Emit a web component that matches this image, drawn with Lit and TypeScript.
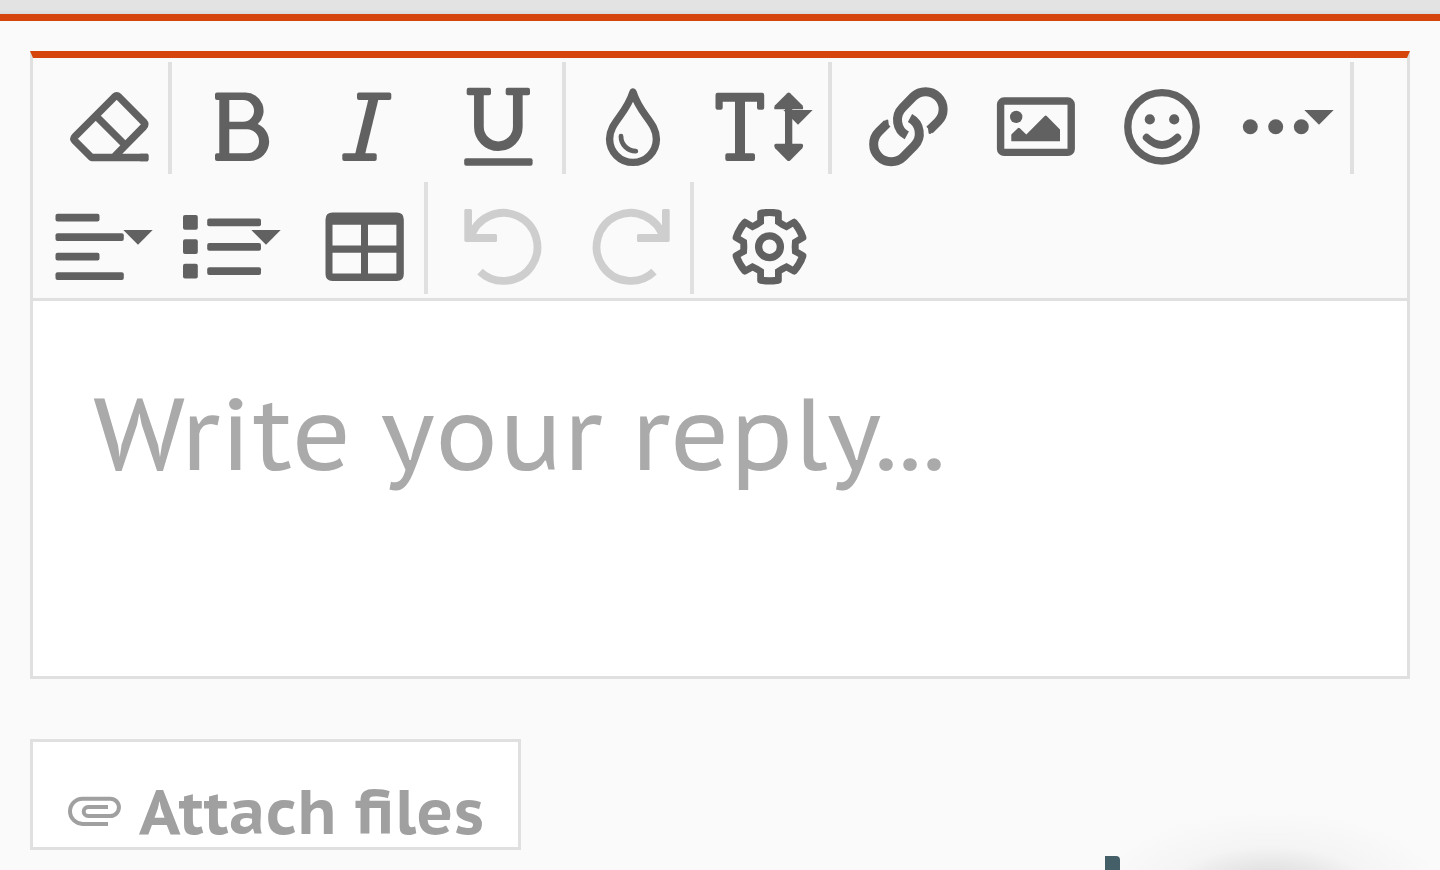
import { LitElement, html, css, svg, nothing } from "lit";
import type { SVGTemplateResult } from "lit";
import { customElement, property, state } from "lit/decorators.js";

interface Tool {
  label: string;
  // left and top corner of the icon's 128 x 112 artboard
  x: number;
  y: number;
  art: SVGTemplateResult;
  menu?: boolean;
  disabled?: boolean;
}

const caret = (x: number, y: number) =>
  svg`<path d="M${x} ${y}h29.4l-14.7 14.7z"/>`;

// One tooth outline of the cog, repeated six times around the centre.
function ring(points: number[][], cx: number, cy: number): string {
  const all: string[] = [];
  for (let k = 0; k < 6; k++) {
    const a = (k * Math.PI) / 3;
    for (const [x, y] of points) {
      const px = cx + x * Math.cos(a) - y * Math.sin(a);
      const py = cy + x * Math.sin(a) + y * Math.cos(a);
      all.push(`${px.toFixed(2)} ${py.toFixed(2)}`);
    }
  }
  return `M${all.join("L")}Z`;
}

const cog =
  ring(
    [[-12.3, -26.6], [-12.3, -34], [-11.8, -35.8], [-9.5, -37], [-4, -37.8], [4, -37.8], [9.5, -37], [11.8, -35.8], [12.3, -34], [12.3, -26.6]],
    769.5,
    246.7,
  ) +
  ring([[-5.5, -22.9], [-5.5, -30.2], [0, -30.6], [5.5, -30.2], [5.5, -22.9], [11.1, -19.2]], 769.5, 246.7);

const linkHalf = "M929.500 130L938 121.600A17.500 17.500 0 0 0 913.200 96.800L902.600 107.600A17.500 17.500 0 0 0 906.800 135.400";
const linkTip = "M927.700 125.500L928.500 132.800Q929.200 134.800 931 133.500L936 129Z";

const undoArt = svg`
  <path d="M480 271.6A34 34 0 1 0 470.6 238" fill="none" stroke="currentColor" stroke-width="7.8"/>
  <path d="M465.5 209H470.5Q472 209 472 210.500V234H495.500Q497 234 497 235.500V240.500Q497 242 495.500 242H466Q464.300 242 464.300 240.300V210.500Q464.300 209 465.500 209Z"/>`;

const groups: Tool[][] = [
  [
    {
      label: "Clear formatting", x: 37, y: 62,
      art: svg`<g fill="none" stroke="currentColor" stroke-width="7.4" stroke-linejoin="round">
        <path d="M148 157.500H91.500L75 141Q72.900 138.700 75 136.500L114.400 97Q116.700 94.800 119 97L143.600 121.800Q145.900 124.300 143.600 126.800L114 157"/>
        <path d="M97 117L123.500 143.500"/></g>
        <path d="M140 153.800H146.800Q148.700 153.800 148.700 155.500V159.500Q148.700 161.200 146.800 161.200H140Z"/>`,
    },
  ],
  [
    {
      label: "Bold", x: 175, y: 62,
      art: svg`<path fill-rule="evenodd" d="M217 92.500H245.500A18.200 18.200 0 0 1 257.800 124A19.400 19.400 0 0 1 248.500 161H217q-2 0-2-2v-3.700q0-2 2-2h2.300V100H217q-2 0-2-2v-3.500q0-2 2-2ZM229.300 100V121.700H243.200a10.850 10.850 0 0 0 0-21.700ZM229.300 129.300V153.300H247a12 12 0 0 0 0-24Z"/>`,
    },
    {
      label: "Italic", x: 303, y: 62,
      art: svg`<rect x="357" y="92.500" width="34.300" height="7.500" rx="2"/>
        <rect x="342.300" y="153.300" width="34.400" height="7.700" rx="2"/>
        <path d="M368.500 99H378.500L365 154.500H355Z"/>`,
    },
    {
      label: "Underline", x: 431, y: 62,
      art: svg`<rect x="466.700" y="87.700" width="24.300" height="7.500" rx="2"/>
        <rect x="505.700" y="87.700" width="24.300" height="7.500" rx="2"/>
        <path d="M478.900 92V126.800a19.450 19.450 0 0 0 38.900 0V92" fill="none" stroke="currentColor" stroke-width="9.700"/>
        <rect x="464.200" y="158.200" width="68.400" height="7.600" rx="2"/>`,
    },
  ],
  [
    {
      label: "Colors", x: 569, y: 62,
      art: svg`<g fill="none" stroke="currentColor" stroke-linejoin="round" stroke-linecap="round">
        <path stroke-width="7.400" d="M633 92C640 115 656.400 122.500 656.400 139A23.400 23.400 0 0 1 609.600 139C609.600 122.500 626 115 633 92Z"/>
        <path stroke-width="4.800" d="M621 136.200C621 144.500 627.500 151 635.800 151.200"/></g>`,
    },
    {
      label: "Font size", x: 697, y: 62, menu: true,
      art: svg`<path d="M717.500 92.800H762Q764.200 92.800 764.200 95V107.700Q764.200 109.700 762.200 109.700H759Q757 109.700 757 107.700V101.700H745V153.300H753Q755 153.300 755 155.300V159Q755 161 753 161H727.300Q725.300 161 725.300 159V155.300Q725.300 153.300 727.300 153.300H735V101.700H722.700V107.700Q722.700 109.700 720.700 109.700H717.500Q715.500 109.700 715.500 107.700V95Q715.500 92.800 717.500 92.800Z"/>
        <path d="M787.200 93.200Q788.700 91.800 790.200 93.200L802.300 105.300Q803.600 107 803 109.200H774.400Q773.800 107 775.100 105.300Z"/>
        <path d="M785 108.500H792.300V145H785Z"/>
        <path d="M787.200 160.400Q788.700 161.800 790.200 160.400L802.300 148.300Q804.400 144.500 801.500 143.800H775.900Q773 144.500 775.100 148.300Z"/>
        ${caret(783.3, 110)}`,
    },
  ],
  [
    {
      label: "Insert link", x: 835, y: 62,
      art: svg`<g stroke-width="9" stroke-linejoin="round">
        <path d=${linkHalf} fill="none" stroke="currentColor"/>
        <path d=${linkTip}/>
        <g transform="rotate(180 908.400 126.700)">
          <path d=${linkHalf} fill="none" stroke="currentColor"/>
          <path d=${linkTip}/>
        </g></g>`,
    },
    {
      label: "Insert image", x: 963, y: 62,
      art: svg`<rect x="1000.600" y="101" width="70.600" height="51.400" rx="3.500" fill="none" stroke="currentColor" stroke-width="7.400"/>
        <circle cx="1016.200" cy="116.900" r="6.200"/>
        <path d="M1011.300 141.300V134.500L1017.800 128.200Q1018.800 127.200 1019.800 128.200L1026.300 134.500L1044.700 116Q1045.700 115 1046.700 116L1060 129.500V141.300Z"/>`,
    },
    {
      label: "Emoticons", x: 1091, y: 62,
      art: svg`<circle cx="1162" cy="126.800" r="34.200" fill="none" stroke="currentColor" stroke-width="7.400"/>
        <circle cx="1149.800" cy="119.400" r="5.100"/><circle cx="1174.200" cy="119.400" r="5.100"/>
        <path d="M1146.500 137.500Q1162 152.500 1177.500 137.500" fill="none" stroke="currentColor" stroke-width="7.400" stroke-linecap="round"/>`,
    },
    {
      label: "More rich", x: 1219, y: 62, menu: true,
      art: svg`<circle cx="1250.300" cy="126.800" r="7.500"/><circle cx="1275.700" cy="126.800" r="7.500"/><circle cx="1301.300" cy="126.800" r="7.500"/>
        ${caret(1304.3, 110)}`,
    },
  ],
  [
    {
      label: "Align", x: 37, y: 182, menu: true,
      art: svg`<rect x="55.500" y="213.700" width="44" height="7.700" rx="2"/><rect x="55.500" y="233.200" width="68.300" height="7.700" rx="2"/>
        <rect x="55.500" y="252.700" width="44" height="7.700" rx="2"/><rect x="55.500" y="272.200" width="68.300" height="7.700" rx="2"/>
        ${caret(123.3, 230)}`,
    },
    {
      label: "Lists", x: 165, y: 182, menu: true,
      art: svg`<rect x="183" y="215" width="14.800" height="14.800" rx="2"/><rect x="183" y="239.300" width="14.800" height="14.800" rx="2"/>
        <rect x="183" y="263.700" width="14.800" height="14.800" rx="2"/>
        <rect x="207.200" y="218.600" width="53.800" height="7.700" rx="2"/><rect x="207.200" y="243" width="53.800" height="7.700" rx="2"/>
        <rect x="207.200" y="267.300" width="53.800" height="7.700" rx="2"/>
        ${caret(251.3, 230)}`,
    },
    {
      label: "Insert table", x: 293, y: 182,
      art: svg`<path fill-rule="evenodd" d="M332.500 212.500H396.800Q403.800 212.500 403.800 219.500V274Q403.800 281 396.800 281H332.500Q325.500 281 325.500 274V219.500Q325.500 212.500 332.500 212.500ZM332.500 224.700V245.500H361V224.700ZM368 224.700V245.500H396.400V224.700ZM332.500 252.700V273.500H361V252.700ZM368 252.700V273.500H396.400V252.700Z"/>`,
    },
  ],
  [
    { label: "Undo", x: 431, y: 182, disabled: true, art: undoArt },
    {
      label: "Redo", x: 559, y: 182, disabled: true,
      art: svg`<g transform="matrix(-1 0 0 1 1134 0)">${undoArt}</g>`,
    },
  ],
  [
    {
      label: "Settings", x: 697, y: 182,
      art: svg`<path fill-rule="evenodd" d=${cog}/>
        <circle cx="769.500" cy="246.700" r="10.900" fill="none" stroke="currentColor" stroke-width="7.300"/>`,
    },
  ],
];

@customElement("editor-toolbar")
export class EditorToolbar extends LitElement {
  @property({ attribute: false }) groups: Tool[][] = [];

  static styles = css`
    :host {
      display: block;
    }
    .bar {
      display: flex;
      flex-wrap: wrap;
      padding-left: 4px;
    }
    .tool {
      flex: none;
      box-sizing: border-box;
      width: 128px;
      height: 112px;
      margin: 4px 0;
      padding: 0;
      border: 0;
      background: none;
      color: #616161;
      cursor: pointer;
    }
    .tool:disabled {
      color: #cecece;
      cursor: default;
    }
    .icon {
      display: block;
      width: 100%;
      height: 100%;
      fill: currentColor;
    }
    .separator {
      flex: none;
      width: 4px;
      height: 112px;
      margin: 4px 3px;
      background: #e0e0e0;
    }
  `;

  render() {
    return html`<div class="bar" role="toolbar" aria-label="Formatting">
      ${this.groups.map(
        (group, i) => html`${i > 0 ? html`<span class="separator" role="separator"></span>` : nothing}${group.map(
            (tool) => html`<button
              class="tool"
              type="button"
              aria-label=${tool.label}
              aria-haspopup=${tool.menu ? "menu" : nothing}
              ?disabled=${tool.disabled}
            >
              <svg class="icon" viewBox="${tool.x} ${tool.y} 128 112" aria-hidden="true">${tool.art}</svg>
            </button>`,
          )}`,
      )}
    </div>`;
  }
}

@customElement("app-root")
export class AppRoot extends LitElement {
  @state() private reply = "";

  static styles = css`
    :host {
      display: block;
      font-family: "PT Sans Caption", "Open Sans", "Noto Sans", sans-serif;
    }
    .page {
      position: relative;
      box-sizing: border-box;
      min-height: 100vh;
      overflow: hidden;
      background: #fafafa;
    }
    .strip {
      height: 14px;
      background: linear-gradient(#e3e3e3 70%, #dadada);
    }
    .panel {
      padding: 30px 30px 20px;
      border-top: 7px solid #d5450c;
    }
    .editor {
      border: 3px solid #e0e0e0;
      border-top: 7px solid #d5450c;
    }
    .reply {
      display: block;
      box-sizing: border-box;
      width: 100%;
      height: 378px;
      margin: 0;
      padding: 60px;
      border: 0;
      border-top: 3px solid #e0e0e0;
      border-radius: 0;
      outline: 0;
      resize: none;
      overflow: hidden;
      background: #fff;
      color: #333;
      font: inherit;
      font-size: 101px;
      line-height: 144px;
    }
    .reply::placeholder {
      color: #aaa;
      opacity: 1;
    }
    .attach {
      display: flex;
      align-items: center;
      gap: 17px;
      box-sizing: border-box;
      height: 111px;
      margin-top: 60px;
      padding: 33px 34px 0 35px;
      border: 3px solid #e0e0e0;
      border-radius: 0;
      background: #fff;
      color: #a0a0a0;
      font-family: inherit;
      font-size: 63px;
      font-weight: 700;
      line-height: 70px;
      white-space: nowrap;
      cursor: pointer;
    }
    .clip {
      flex: none;
      width: 54px;
      height: 30px;
    }
    .glow {
      position: absolute;
      right: -10px;
      bottom: -120px;
      width: 360px;
      height: 180px;
      background: radial-gradient(closest-side, #0004, #00000018 33%, #00000006 60%, #0000);
      pointer-events: none;
    }
    .tab {
      position: absolute;
      right: 320px;
      bottom: 0;
      width: 15px;
      height: 14px;
      border-top-right-radius: 4px;
      background: #455f68;
    }
  `;

  private onInput(e: Event) {
    this.reply = (e.target as HTMLTextAreaElement).value;
  }

  render() {
    return html`<main class="page">
      <div class="strip"></div>
      <section class="panel">
        <div class="editor">
          <editor-toolbar .groups=${groups}></editor-toolbar>
          <textarea
            class="reply"
            aria-label="Reply"
            placeholder="Write your reply..."
            .value=${this.reply}
            @input=${this.onInput}
          ></textarea>
        </div>
        <button class="attach" type="button">
          <svg class="clip" viewBox="68 796 54 30" fill="none" stroke="currentColor" stroke-width="4" aria-hidden="true">
            <path d="M108 823.900H82.600a12.600 12.600 0 0 1 0-25.200H110.300a8.650 8.650 0 0 1 0 17.300H88.200a4.500 4.500 0 0 1 0-9H108" />
          </svg>
          <span>Attach files</span>
        </button>
      </section>
      <div class="glow"></div>
      <div class="tab"></div>
    </main>`;
  }
}
